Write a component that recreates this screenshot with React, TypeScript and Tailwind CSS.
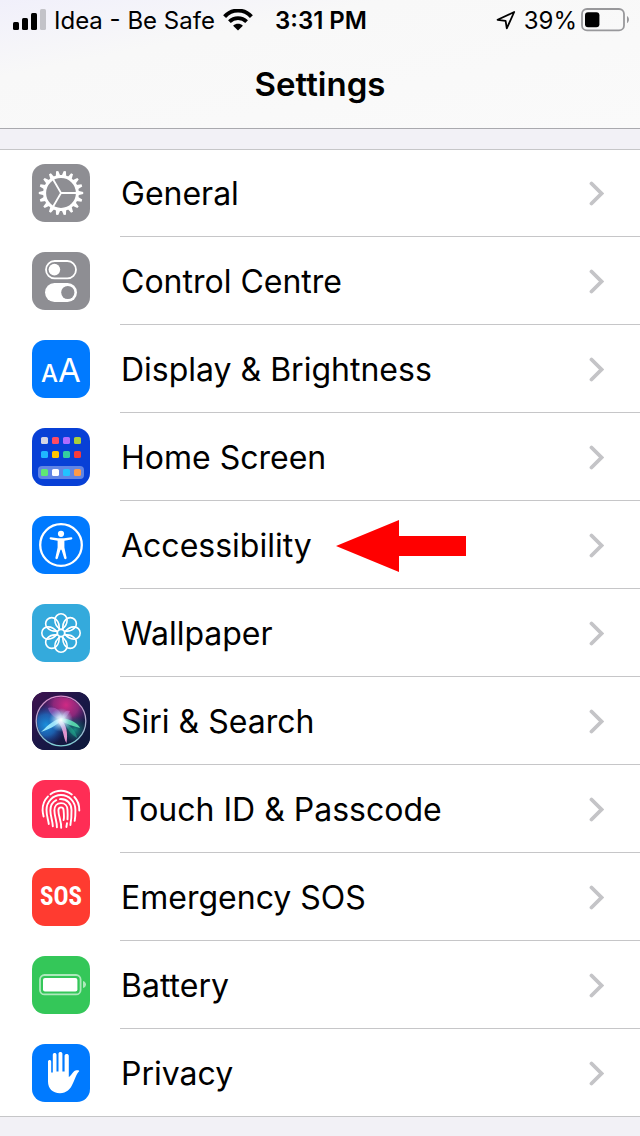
import { ReactNode } from 'react';
import clsx from 'clsx';

interface ISettingItem {
  label: string;
  iconClassName: string;
  icon: ReactNode;
  highlighted?: boolean;
}

const GEAR_TEETH = Array.from({ length: 18 }, (_, index) => index * 20);
const PETALS = Array.from({ length: 8 }, (_, index) => index * 45);

const HOME_COLUMNS = [9, 20, 31, 42];
const HOME_ROWS = [
  { y: 9, colors: ['#d5d5e3', '#ff4b63', '#b06cff', '#a9cf3c'] },
  { y: 23, colors: ['#1fb6ff', '#ffc400', '#35cfa0', '#f63b3b'] },
  { y: 41, colors: ['#5fe873', '#ffffff', '#22c3ff', '#ff9a47'] },
];

const Glyph = ({ children }: { children: ReactNode }) => (
  <svg viewBox="0 0 58 58" className="size-full" fill="none" aria-hidden="true">
    {children}
  </svg>
);

const GearIcon = () => (
  <Glyph>
    <circle cx="29" cy="29" r="16.4" stroke="#fff" strokeWidth="3" />
    {GEAR_TEETH.map((angle) => (
      <path key={angle} d="M46 26.7L51.2 27.9V30.1L46 31.3Z" fill="#fff" transform={`rotate(${angle} 29 29)`} />
    ))}
    <path d="M29 29H45M29 29L21 15.2M29 29L21 42.8" stroke="#fff" strokeWidth="1.8" />
  </Glyph>
);

const ControlCentreIcon = () => (
  <Glyph>
    <rect x="14" y="9" width="30" height="17.4" rx="8.7" stroke="#fff" strokeWidth="1.8" />
    <circle cx="22.4" cy="17.6" r="5.8" fill="#fff" />
    <rect x="13" y="31" width="32" height="19" rx="9.5" fill="#fff" />
    <circle cx="35.8" cy="40.5" r="6.6" fill="#8e8e93" />
  </Glyph>
);

const DisplayIcon = () => (
  <span className="flex h-full items-baseline justify-center text-white" aria-hidden="true">
    <span className="text-2xl leading-[60px] font-medium">A</span>
    <span className="text-[33px] leading-[60px]">A</span>
  </span>
);

const HomeScreenIcon = () => (
  <Glyph>
    <rect x="6" y="38" width="46" height="13" rx="4" fill="#fff" fillOpacity="0.36" />
    {HOME_ROWS.map(({ y, colors }) =>
      colors.map((color, index) => (
        <rect key={color} x={HOME_COLUMNS[index]} y={y} width="7" height="7" rx="1.6" fill={color} />
      )),
    )}
  </Glyph>
);

const AccessibilityIcon = () => (
  <Glyph>
    <circle cx="29" cy="29" r="20.8" stroke="#fff" strokeWidth="2.3" />
    <circle cx="29" cy="17.8" r="3.1" fill="#fff" />
    <path
      d="M18.9 21.2L26 22.3H32L39.1 21.2C40.7 21.1 40.8 23.1 39.4 23.4L32.4 24.8V31.5L34.6 41.8C34.8 43.3 32.7 43.7 32.2 42.3L29.5 33.8H28.5L25.8 42.3C25.3 43.7 23.2 43.3 23.4 41.8L25.6 31.5V24.8L18.6 23.4C17.2 23.1 17.3 21.1 18.9 21.2Z"
      fill="#fff"
    />
  </Glyph>
);

const WallpaperIcon = () => (
  <Glyph>
    <circle cx="29" cy="29" r="3.6" stroke="#fff" strokeWidth="1.6" />
    {PETALS.map((angle) => (
      <path
        key={angle}
        d="M28.2 25.2C24.4 22.6 22.9 19 22.9 15.9A6.1 6.1 0 0 1 35.1 15.9C35.1 19 33.6 22.6 29.8 25.2"
        stroke="#fff"
        strokeWidth="1.6"
        transform={`rotate(${angle} 29 29)`}
      />
    ))}
  </Glyph>
);

const SiriIcon = () => (
  <Glyph>
    <defs>
      <linearGradient id="siri-base" x1="0" y1="0" x2="1" y2="1">
        <stop offset="0" stopColor="#40124f" />
        <stop offset="0.5" stopColor="#1a1747" />
        <stop offset="1" stopColor="#0c1a3a" />
      </linearGradient>
      <linearGradient id="siri-ring" x1="0" y1="0" x2="0" y2="1">
        <stop offset="0" stopColor="#d98ac8" />
        <stop offset="1" stopColor="#7fcfd4" />
      </linearGradient>
      <radialGradient id="siri-pink" cx="34" cy="13" r="25" gradientUnits="userSpaceOnUse">
        <stop offset="0" stopColor="#d02a84" />
        <stop offset="0.5" stopColor="#a52c86" stopOpacity="0.8" />
        <stop offset="1" stopColor="#5a2a8e" stopOpacity="0" />
      </radialGradient>
      <radialGradient id="siri-blue" cx="14" cy="33" r="21" gradientUnits="userSpaceOnUse">
        <stop offset="0" stopColor="#1a8fdc" />
        <stop offset="0.5" stopColor="#1d6fc4" stopOpacity="0.8" />
        <stop offset="1" stopColor="#1d3f9a" stopOpacity="0" />
      </radialGradient>
      <radialGradient id="siri-green" cx="43" cy="38" r="14" gradientUnits="userSpaceOnUse">
        <stop offset="0" stopColor="#178c80" />
        <stop offset="1" stopColor="#115366" stopOpacity="0" />
      </radialGradient>
      <radialGradient id="siri-glow" cx="29" cy="28" r="12" gradientUnits="userSpaceOnUse">
        <stop offset="0" stopColor="#fff" />
        <stop offset="0.35" stopColor="#d6f6ff" stopOpacity="0.8" />
        <stop offset="1" stopColor="#7bd5ff" stopOpacity="0" />
      </radialGradient>
    </defs>
    <rect width="58" height="58" fill="url(#siri-base)" />
    <circle cx="29" cy="29" r="24" fill="url(#siri-pink)" />
    <circle cx="29" cy="29" r="24" fill="url(#siri-blue)" />
    <circle cx="29" cy="29" r="24" fill="url(#siri-green)" />
    <path d="M16 16C24 14 30 19 30 28C23 26 18 23 16 16Z" fill="#d27ade" fillOpacity="0.4" />
    <path d="M30 27C31 20 34 18 38 19C36 23 34 26 30 27Z" fill="#e08be8" fillOpacity="0.4" />
    <path d="M9 40C17 32 23 27 31 26C27 32 20 36 9 40Z" fill="#a5f0ff" fillOpacity="0.9" />
    <path d="M28 27C35 32 36 42 34.5 51C31 46 32 37 26 30Z" fill="#f6a0da" fillOpacity="0.9" />
    <path d="M29 26C38 27 46 31 48 36C41 34 34 32 29 29Z" fill="#5fe8b4" fillOpacity="0.85" />
    <path d="M33 31C40 34 45 42 45 46C40 43 36 39 33 31Z" fill="#2bcda0" fillOpacity="0.4" />
    <circle cx="29" cy="28" r="12" fill="url(#siri-glow)" />
    <circle cx="29" cy="29" r="24.8" stroke="url(#siri-ring)" strokeWidth="1.3" />
  </Glyph>
);

const TouchIdIcon = () => (
  <Glyph>
    <g stroke="#fff" strokeWidth="1.9" strokeLinecap="round">
      <path d="M18.5 14.3C21.5 12 25 10.8 29 10.8C33 10.8 36.5 12 39.8 14.5" />
      <path d="M42.4 17C45.8 20.5 47.4 25 47.3 30.5" />
      <path d="M16 16.4C12.4 20 10.4 25 10.6 30.5C10.7 32.5 11.1 34.5 11.6 36.5" />
      <path d="M16.8 44C16.2 39.5 14.5 36 14.5 30C14.5 21.5 21 15 29 15C37 15 43.4 21.5 43.4 30C43.5 34 43.3 37.5 42.7 40.8" />
      <path d="M20.8 46.2C20.8 41 18.4 36.5 18.4 30.5C18.4 25.6 20.7 22 24.3 20.2" />
      <path d="M28 19.1C35 18.7 39.5 23.5 39.5 30C39.6 36 39.3 40.5 38.4 45" />
      <path d="M24.9 47.3C25.1 41.5 22.4 36.5 22.4 30.5C22.4 26 25 23.1 29 23.1C33 23.1 35.5 26 35.5 30C35.7 33.5 35.7 36.5 35.5 39.4" />
      <path d="M35 43.2L34.4 47" />
      <path d="M29.2 47.7C29.5 41.5 26.4 36.5 26.4 30.5C26.4 26.3 31.6 26.3 31.6 30.5C32 35 32 39 31.6 40" />
    </g>
  </Glyph>
);

const SosIcon = () => (
  <span
    className="flex h-full items-center justify-center font-['Roboto_Condensed','Roboto',sans-serif] text-[25px] font-bold text-white"
    aria-hidden="true"
  >
    SOS
  </span>
);

const BatteryIcon = () => (
  <Glyph>
    <rect x="8" y="19" width="40.6" height="19.4" rx="4.5" stroke="#fff" strokeOpacity="0.6" strokeWidth="1.8" />
    <rect x="11" y="22" width="34.4" height="13.4" rx="2" fill="#fff" />
    <path d="M51 25C55 26 55 31 51 32Z" fill="#fff" fillOpacity="0.6" />
  </Glyph>
);

const HandIcon = () => (
  <Glyph>
    <path
      d="M16 17.6C16 15.3 19.2 15.3 19.2 17.6V28.5H20.8V10.8C20.8 8.3 24.5 8.3 24.5 10.8V27.5H26.5V9.8C26.5 7.3 30.4 7.3 30.4 9.8V27.5H32.6V11.8C32.6 9.3 36.8 9.3 36.8 11.8V33C39 32.3 40.3 27.7 43.5 26.5C45.5 25.8 47.4 26.3 47.2 27.2C44.5 29.3 42.8 35.5 40.8 39.6C38.5 45.4 34.5 49.2 28 49.2C20.5 49.2 16 44.5 16 37.5Z"
      fill="#fff"
    />
  </Glyph>
);

const SETTINGS: ISettingItem[] = [
  { label: 'General', iconClassName: 'bg-[#8e8e93]', icon: <GearIcon /> },
  { label: 'Control Centre', iconClassName: 'bg-[#8e8e93]', icon: <ControlCentreIcon /> },
  { label: 'Display & Brightness', iconClassName: 'bg-[#007aff]', icon: <DisplayIcon /> },
  { label: 'Home Screen', iconClassName: 'bg-[#0840d6]', icon: <HomeScreenIcon /> },
  { label: 'Accessibility', iconClassName: 'bg-[#007aff]', icon: <AccessibilityIcon />, highlighted: true },
  { label: 'Wallpaper', iconClassName: 'bg-[#34aadc]', icon: <WallpaperIcon /> },
  { label: 'Siri & Search', iconClassName: 'bg-[#141442]', icon: <SiriIcon /> },
  { label: 'Touch ID & Passcode', iconClassName: 'bg-[#ff2d55]', icon: <TouchIdIcon /> },
  { label: 'Emergency SOS', iconClassName: 'bg-[#ff3b30]', icon: <SosIcon /> },
  { label: 'Battery', iconClassName: 'bg-[#34c759]', icon: <BatteryIcon /> },
  { label: 'Privacy', iconClassName: 'bg-[#007aff]', icon: <HandIcon /> },
];

const StatusBar = () => (
  <div className="grid h-10 grid-cols-[1fr_auto_1fr] items-center pr-2.5 pl-3 text-2xl">
    <div className="flex items-center gap-2">
      <svg viewBox="0 0 34 22" className="h-[22px] w-[34px]" aria-hidden="true">
        <rect x="1" y="13" width="6" height="8" rx="1.5" />
        <rect x="10" y="9" width="6" height="12" rx="1.5" />
        <rect x="19" y="4" width="6" height="17" rx="1.5" />
        <rect x="28" y="0" width="6" height="21" rx="1.5" fill="#c3c3c8" />
      </svg>
      <span className="pt-0.5 whitespace-nowrap">Idea - Be Safe</span>
      <svg viewBox="0 0 30 22" className="h-[22px] w-[30px]" fill="none" stroke="#000" aria-hidden="true">
        <path d="M1.6 7.6C9 -0.4 21 -0.4 28.4 7.6" strokeWidth="4" />
        <path d="M6.4 12.7C11.2 7.9 18.8 7.9 23.6 12.7" strokeWidth="3.8" />
        <path d="M10.1 16.7C13 14.2 17 14.2 19.9 16.7L15 21.6Z" fill="#000" stroke="none" />
      </svg>
    </div>
    <span className="pt-0.5 font-semibold">3:31 PM</span>
    <div className="flex items-center justify-end">
      <svg viewBox="0 0 20 20" className="mr-2 size-5" fill="none" aria-hidden="true">
        <path d="M18.2 2L1.6 9.8L9.6 10.8L10.8 18.4Z" stroke="#000" strokeWidth="1.8" strokeLinejoin="round" />
      </svg>
      <span className="pt-0.5">39%</span>
      <svg viewBox="0 0 49 24" className="ml-1 h-6 w-[49px]" fill="none" aria-hidden="true">
        <rect x="1" y="1" width="42" height="21.4" rx="5" stroke="#98989b" strokeWidth="1.8" />
        <rect x="4" y="4.2" width="14.4" height="15" rx="3" fill="#000" />
        <path d="M46 8C48.6 9.6 48.6 13.6 46 15.2Z" fill="#98989b" />
      </svg>
    </div>
  </div>
);

const SettingRow = ({ item, isLast }: { item: ISettingItem; isLast: boolean }) => (
  <li>
    <a href="#" className="flex h-22 items-center gap-[30px] pl-8">
      <span className={clsx('size-[58px] shrink-0 overflow-hidden rounded-[13px]', item.iconClassName)}>
        {item.icon}
      </span>
      <span
        className={clsx('flex h-full flex-1 items-center pt-0.5 pr-9 pl-px', !isLast && 'border-b border-[#c6c6c8]')}
      >
        <span className="text-[32px] leading-10 whitespace-nowrap">{item.label}</span>
        {item.highlighted && (
          <svg viewBox="0 0 130 52" className="ml-6 h-[52px] w-[130px]" aria-hidden="true">
            <path d="M0 26L63 0V16H130V36H63V52Z" fill="#ff0000" />
          </svg>
        )}
        <svg viewBox="0 0 15 26" className="ml-auto h-[26px] w-[15px]" fill="none" aria-hidden="true">
          <path d="M2.5 2.5L12.5 12.5L2.5 22.5" stroke="#c4c4c7" strokeWidth="3.8" strokeLinecap="round" />
        </svg>
      </span>
    </a>
  </li>
);

const App = () => {
  return (
    <div className="min-h-screen bg-[#f2f1f6] font-['Inter',sans-serif] text-black">
      <header className="border-b border-[#a9a9ae] bg-linear-to-br from-[#f1f0fb] via-[#f8f8f8] via-30% to-[#fafafa]">
        <StatusBar />
        <h1 className="flex h-22 items-center justify-center text-[33px] leading-10 font-semibold">Settings</h1>
      </header>
      <main className="pt-5">
        <ul className="bg-white shadow-[inset_0_1px_0_#c6c6c8,inset_0_-1px_0_#c6c6c8]">
          {SETTINGS.map((item, index) => (
            <SettingRow key={item.label} item={item} isLast={index === SETTINGS.length - 1} />
          ))}
        </ul>
      </main>
    </div>
  );
};

export default App;
